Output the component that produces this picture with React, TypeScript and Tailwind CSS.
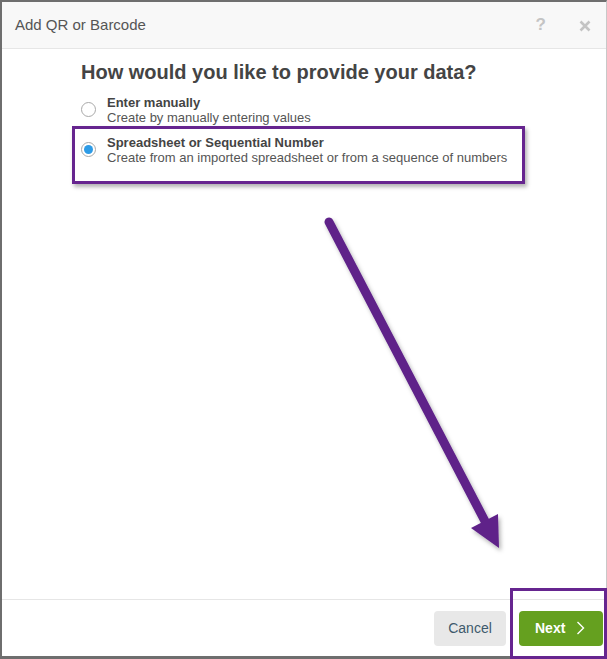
import React from "react";

function Radio({ checked }: { checked?: boolean }) {
  return (
    <div className="w-[15px] h-[15px] rounded-full border border-[#a9a9a9] bg-white flex items-center justify-center shrink-0 mt-[7px]">
      {checked && <div className="w-[9px] h-[9px] rounded-full bg-[#2d9be6]" />}
    </div>
  );
}

export default function App() {
  return (
    <div className="relative w-[607px] h-[659px] overflow-hidden bg-white" style={{ fontFamily: '"Liberation Sans", Arial, sans-serif' }}>
      <div className="w-[607px] h-[659px] flex flex-col border-t-2 border-l-2 border-b-[3px] border-r border-t-[#6e6e6e] border-l-[#6e6e6e] border-b-[#6e6e6e] border-r-[#c8c8c8]">
        {/* header */}
        <div className="h-[47px] shrink-0 bg-[#f8f8f8] border-b border-[#e6e6e6] flex items-center pl-[13px] pr-[15px]">
          <div className="text-[15px] text-[#555] flex-1 pt-[1px]">Add QR or Barcode</div>
          <div className="text-[17px] font-bold text-[#c4c4c4] mr-[33px]">?</div>
          <svg width="12" height="12" viewBox="0 0 12 12" className="mt-[1px]">
            <path d="M1.5 1.5 L10.5 10.5 M10.5 1.5 L1.5 10.5" stroke="#c4c4c4" strokeWidth="2.6" strokeLinecap="butt" />
          </svg>
        </div>
        {/* body */}
        <div className="flex-1 pl-[79px] pt-[11px]">
          <div className="text-[20px] leading-[24px] font-bold text-[#444]">How would you like to provide your data?</div>
          <div className="flex gap-[11px] mt-[11px]">
            <Radio />
            <div className="text-[13px] leading-[15px]">
              <div className="font-bold text-[#444]">Enter manually</div>
              <div className="text-[#555]">Create by manually entering values</div>
            </div>
          </div>
          <div className="flex gap-[11px] mt-[10px]">
            <Radio checked />
            <div className="text-[13px] leading-[15px]">
              <div className="font-bold text-[#444]">Spreadsheet or Sequential Number</div>
              <div className="text-[#555]">Create from an imported spreadsheet or from a sequence of numbers</div>
            </div>
          </div>
        </div>
        {/* footer */}
        <div className="h-[57px] shrink-0 border-t border-[#e6e6e6] flex items-center justify-end gap-[13px] pr-[3px]">
          <button className="w-[72px] h-[35px] rounded-[4px] bg-[#e8e8e8] text-[14px] text-[#3e5a6c]">Cancel</button>
          <button className="w-[84px] h-[35px] rounded-[4px] bg-[#65a01f] text-[14px] font-bold text-white flex items-center justify-start gap-[11px] pl-[16px]">
            <span>Next</span>
            <svg width="9" height="14" viewBox="0 0 9 14">
              <path d="M1.5 1 L7.5 7 L1.5 13" stroke="white" strokeWidth="1.4" fill="none" />
            </svg>
          </button>
        </div>
      </div>

      {/* annotation boxes */}
      <div className="absolute left-[72px] top-[126px] w-[453px] h-[58px] border-[3px] border-[#66258f] shadow-[2px_3px_4px_rgba(0,0,0,0.3)]" />
      <div className="absolute left-[510px] top-[588px] w-[97px] h-[71px] border-[3px] border-[#66258f]" />

      {/* arrow */}
      <svg className="absolute left-0 top-0" width="607" height="659" viewBox="0 0 607 659">
        <defs>
          <filter id="sh" x="-20%" y="-20%" width="140%" height="140%">
            <feDropShadow dx="2" dy="3" stdDeviation="2" floodColor="#000" floodOpacity="0.3" />
          </filter>
        </defs>
        <g filter="url(#sh)">
          <line x1="329" y1="222" x2="487" y2="525" stroke="#5f2289" strokeWidth="9" strokeLinecap="round" />
          <polygon points="471,528 498,514 499,548" fill="#5f2289" />
        </g>
      </svg>
    </div>
  );
}
